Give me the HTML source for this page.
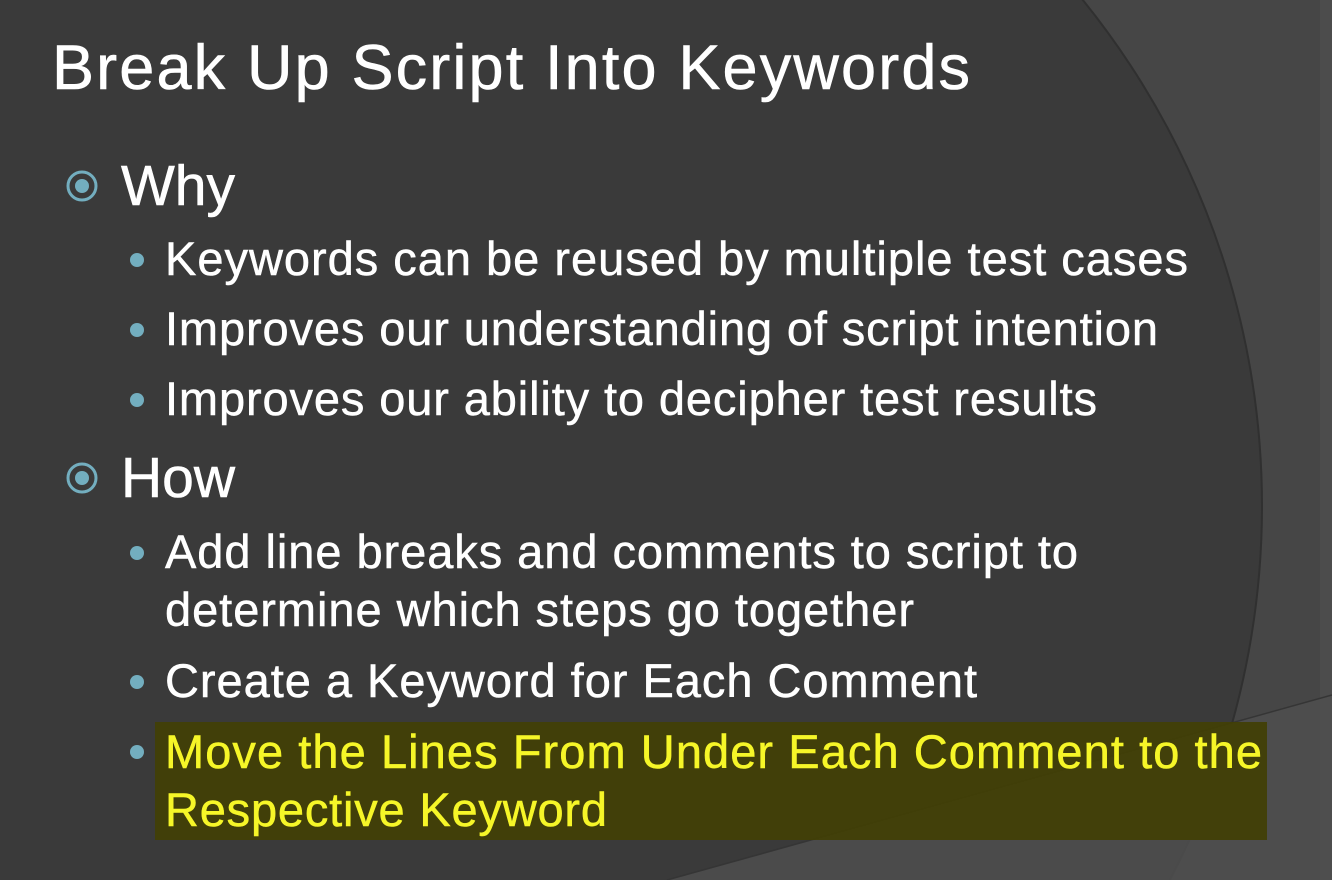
<!DOCTYPE html>
<html><head><meta charset="utf-8"><style>
html,body{margin:0;padding:0;background:#454545;overflow:hidden;width:1332px;height:880px;}
svg{display:block;}
text{font-family:"Liberation Sans",sans-serif;}
</style></head><body>
<svg width="1332" height="880" viewBox="0 0 1332 880" xmlns="http://www.w3.org/2000/svg">
<rect width="1332" height="880" fill="#464646"/>
<rect x="1320" y="0" width="12" height="880" fill="#4c4c4c"/>
<circle cx="458" cy="506" r="804" fill="#3a3a3a" stroke="#303030" stroke-width="2"/>
<polygon points="667,880 1332,695 1332,880" fill="#4f4f4f" opacity="0.85"/>
<line x1="667" y1="880" x2="1332" y2="695" stroke="#353535" stroke-width="1.5"/>
<g stroke="#ffffff" stroke-width="0.6">
<text x="52" y="89" font-size="63" fill="#ffffff" textLength="918" lengthAdjust="spacing">Break Up Script Into Keywords</text>
<text x="121" y="205" font-size="57" fill="#ffffff">Why</text>
<text x="121" y="497" font-size="57" fill="#ffffff">How</text>
</g>
<circle cx="82" cy="186" r="14" fill="none" stroke="#73aebf" stroke-width="3"/>
<circle cx="82" cy="186" r="7" fill="#73aebf"/>
<circle cx="82" cy="478" r="14" fill="none" stroke="#73aebf" stroke-width="3"/>
<circle cx="82" cy="478" r="7" fill="#73aebf"/>
<g fill="#73aebf">
<circle cx="137" cy="260" r="7"/>
<circle cx="137" cy="330" r="7"/>
<circle cx="137" cy="400" r="7"/>
<circle cx="137" cy="553" r="7"/>
<circle cx="137" cy="682" r="7"/>
<circle cx="137" cy="752" r="7"/>
</g>
<rect x="155" y="722" width="1112" height="118" fill="#413f06" opacity="0.95"/>
<g font-size="47" fill="#ffffff" stroke="#ffffff" stroke-width="0.5">
<text x="165" y="275" textLength="1023" lengthAdjust="spacing">Keywords can be reused by multiple test cases</text>
<text x="165" y="345" textLength="993" lengthAdjust="spacing">Improves our understanding of script intention</text>
<text x="165" y="415" textLength="932" lengthAdjust="spacing">Improves our ability to decipher test results</text>
<text x="165" y="568" textLength="913" lengthAdjust="spacing">Add line breaks and comments to script to</text>
<text x="165" y="626" textLength="749" lengthAdjust="spacing">determine which steps go together</text>
<text x="165" y="697" textLength="812" lengthAdjust="spacing">Create a Keyword for Each Comment</text>
</g>
<g font-size="47" fill="#f6f628" stroke="#f6f628" stroke-width="0.5">
<text x="165" y="768" textLength="1097" lengthAdjust="spacing">Move the Lines From Under Each Comment to the</text>
<text x="165" y="826" textLength="442" lengthAdjust="spacing">Respective Keyword</text>
</g>
</svg>
</body></html>
